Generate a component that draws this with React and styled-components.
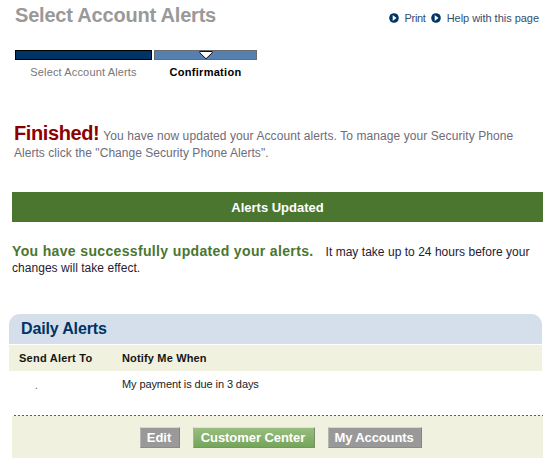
import React from "react";
import styled, { createGlobalStyle } from "styled-components";

const GlobalStyle = createGlobalStyle`
  body {
    margin: 0;
    background: #fff;
    overflow: hidden;
    font-family: "Liberation Sans", Arial, sans-serif;
  }
`;

const Page = styled.main`
  width: 545px;
  height: 458px;
  display: flex;
  flex-direction: column;
  overflow: hidden;
`;

const Text = styled.span`
  font-size: ${({ size }) => size || 12}px;
  font-weight: ${({ bold }) => (bold ? "bold" : "normal")};
  color: ${({ color }) => color || "#000"};
  letter-spacing: ${({ spacing }) => spacing || 0}px;
  white-space: nowrap;
`;

const Header = styled.header`
  height: 50px;
  display: flex;
  justify-content: space-between;
  padding: 0 6px 0 15px;
  line-height: 30px;
`;

const Title = styled.h1`
  margin: 0;
  font-size: 20px;
  color: #999;
  letter-spacing: -0.2px;
`;

const Tools = styled.nav`
  display: flex;
  gap: 5px;
  padding-top: 3px;
`;

const Tool = styled.a`
  display: flex;
  align-items: center;
  height: 29px;
  gap: 6px;
`;

const Steps = styled.div`
  display: flex;
  gap: 2px;
  height: 74px;
  padding-left: 15px;
`;

const Step = styled.div`
  width: ${({ width }) => width}px;
  text-align: center;
  line-height: 22px;
`;

const Bar = styled.div`
  box-sizing: border-box;
  height: 10px;
  display: flex;
  justify-content: center;
  background: ${({ current }) => (current ? "#5580b0" : "#003366")};
  border: 1px solid ${({ current }) => (current ? "#666c70" : "#000")};
`;

const Message = styled.section`
  box-sizing: border-box;
  height: ${({ height }) => height}px;
  padding-top: ${({ top }) => top || 0}px;
  padding-left: ${({ left }) => left}px;
`;

const Line = styled.div`
  display: flex;
  align-items: baseline;
  gap: ${({ gap }) => gap || 0}px;
  height: ${({ height }) => height}px;
  line-height: ${({ height }) => height}px;
`;

const Banner = styled.div`
  height: 30px;
  margin: 0 2px 0 12px;
  background: #4a7630;
  line-height: 30px;
  text-align: center;
`;

const Panel = styled.section`
  margin: 0 3px 0 9px;
`;

const PanelTitle = styled.h2`
  box-sizing: border-box;
  height: 30px;
  margin: 0 0 1px;
  padding-left: 12px;
  border-radius: 11px 11px 0 0;
  background: #d5dfeb;
  line-height: 29px;
  font-size: 16px;
  letter-spacing: -0.15px;
  color: #003366;
`;

const Row = styled.div`
  display: grid;
  grid-template-columns: 103px 1fr;
  padding-left: 10px;
  height: ${({ height }) => height}px;
  line-height: 26px;
  background: ${({ head }) => (head ? "#f0f1df" : "#fff")};
`;

const Dot = styled(Text)`
  padding: 2px 0 0 16px;
`;

const Divider = styled.div`
  height: 1px;
  margin: 0 2px 0 14px;
  background: repeating-linear-gradient(
    90deg,
    #5e5862 0 2px,
    #f5f5ed 2px 4px
  );
`;

const Footer = styled.footer`
  flex: 1;
  display: flex;
  gap: 13px;
  margin: 0 2px 0 12px;
  padding: 11px 0 0 128px;
  background: #f0f1df;
`;

const Button = styled.button`
  box-sizing: border-box;
  width: ${({ width }) => width}px;
  height: 21px;
  padding: 0 2px 0 0;
  border-style: solid;
  border-width: 1px;
  border-color: ${({ primary }) =>
    primary
      ? "#dce5cf #7c8b6c #7b916b #a5b794"
      : "#d9d9d0 #858585 #8b8b8b #b4b4b0"};
  background: ${({ primary }) =>
    primary ? "linear-gradient(#99bd80, #74a559)" : "#999"};
  font: bold 13px/19px "Liberation Sans", Arial, sans-serif;
  letter-spacing: ${({ spacing }) => spacing || 0}px;
  white-space: nowrap;
  color: #fff;
`;

function ArrowIcon() {
  return (
    <svg width="10" height="10" viewBox="0 0 10 10">
      <circle cx="5" cy="5" r="4.8" fill="#003366" />
      <path d="M3.7 2.1L7.5 5L3.7 7.9Z" fill="#fff" />
    </svg>
  );
}

function Pointer() {
  return (
    <svg width="14" height="9" viewBox="0 0 14 9">
      <path d="M.8.5H13.2V1.8L7 7.8L.8 1.8Z" fill="#fff" stroke="#111" />
    </svg>
  );
}

const tools = [
  { label: "Print", spacing: -0.3 },
  { label: "Help with this page", spacing: -0.03 }
];

const buttons = [
  { label: "Edit", width: 40, spacing: 0 },
  { label: "Customer Center", width: 122, primary: true, spacing: -0.06 },
  { label: "My Accounts", width: 94, spacing: -0.12 }
];

export default function App() {
  return (
    <>
      <GlobalStyle />
      <Page>
        <Header>
          <Title>Select Account Alerts</Title>
          <Tools>
            {tools.map(({ label, spacing }) => (
              <Tool key={label}>
                <ArrowIcon />
                <Text size={11} color="#334d73" spacing={spacing}>
                  {label}
                </Text>
              </Tool>
            ))}
          </Tools>
        </Header>
        <Steps>
          <Step width={137}>
            <Bar />
            <Text size={11} color="#777" spacing={0.14}>
              Select Account Alerts
            </Text>
          </Step>
          <Step width={103}>
            <Bar current>
              <Pointer />
            </Bar>
            <Text size={11} bold spacing={0.28}>
              Confirmation
            </Text>
          </Step>
        </Steps>
        <Message height={68} left={14}>
          <Line height={18} gap={4}>
            <Text size={20} bold color="#8e0000" spacing={-0.4}>
              Finished!
            </Text>
            <Text color="#706b78" spacing={0.08}>
              You have now updated your Account alerts. To manage your Security
              Phone
            </Text>
          </Line>
          <Line height={22}>
            <Text color="#706b78" spacing={0.04}>
              Alerts click the "Change Security Phone Alerts".
            </Text>
          </Line>
        </Message>
        <Banner>
          <Text size={13} bold color="#fff">
            Alerts Updated
          </Text>
        </Banner>
        <Message height={92} top={21} left={12}>
          <Line height={16} gap={12}>
            <Text size={14} bold color="#4a7630" spacing={0.35}>
              You have successfully updated your alerts.
            </Text>
            <Text color="#251a33" spacing={0.03}>
              It may take up to 24 hours before your
            </Text>
          </Line>
          <Line height={18}>
            <Text color="#251a33" spacing={0.04}>
              changes will take effect.
            </Text>
          </Line>
        </Message>
        <Panel>
          <PanelTitle>Daily Alerts</PanelTitle>
          <Row head height={26}>
            <Text size={11} bold color="#151515" spacing={0.24}>
              Send Alert To
            </Text>
            <Text size={11} bold color="#151515" spacing={0.16}>
              Notify Me When
            </Text>
          </Row>
          <Row height={44}>
            <Dot size={10} color="#555">
              .
            </Dot>
            <Text size={11} color="#222" spacing={-0.1}>
              My payment is due in 3 days
            </Text>
          </Row>
        </Panel>
        <Divider />
        <Footer>
          {buttons.map(({ label, ...rest }) => (
            <Button key={label} {...rest}>
              {label}
            </Button>
          ))}
        </Footer>
      </Page>
    </>
  );
}
